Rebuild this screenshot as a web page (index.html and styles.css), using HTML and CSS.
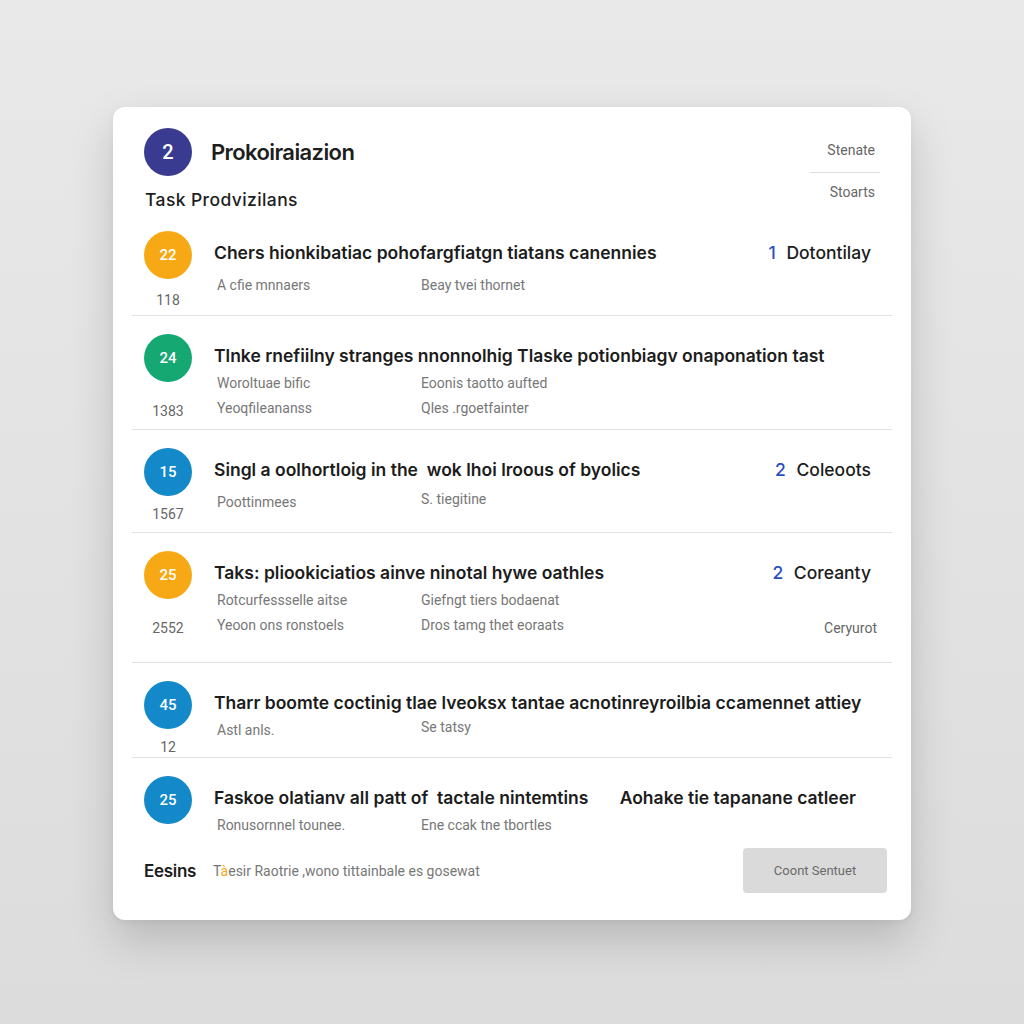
FILE: index.html
```html
<!DOCTYPE html>
<html lang="en">
<head>
  <meta charset="UTF-8">
  <meta name="viewport" content="width=device-width, initial-scale=1.0">
  <title>Prokoiraiazion</title>
  <link rel="stylesheet" href="styles.css">
</head>
<body>

<div class="card">
  <!-- En-tête -->
  <div class="header">
    <div class="header-left">
      <div class="brand">
        <span class="dot dot-indigo">2</span>
        <h1>Prokoiraiazion</h1>
      </div>
      <h2>Task Prodvizilans</h2>
    </div>
    <div class="header-right">
      <span class="meta">Stenate</span>
      <span class="meta meta-sep">Stoarts</span>
    </div>
  </div>

  <!-- Liste des tâches -->
  <div class="tasks">
    <div class="task task-first">
      <div class="task-left">
        <span class="dot dot-orange">22</span>
        <span class="count">118</span>
      </div>
      <div class="task-body">
        <div class="task-title">
          <span>Chers hionkibatiac pohofargfiatgn tiatans canennies</span>
          <span class="badge"><b>1</b> Dotontilay</span>
        </div>
        <div class="task-sub task-sub-low">
          <span>A cfie mnnaers</span>
          <span>Beay tvei thornet</span>
        </div>
      </div>
    </div>

    <div class="task">
      <div class="task-left">
        <span class="dot dot-green">24</span>
        <span class="count">1383</span>
      </div>
      <div class="task-body">
        <div class="task-title">
          <span>Tlnke rnefiilny stranges nnonnolhig Tlaske potionbiagv onaponation tast</span>
        </div>
        <div class="task-sub">
          <span>Woroltuae bific</span>
          <span>Eoonis taotto aufted</span>
          <span>Yeoqfileananss</span>
          <span>Qles .rgoetfainter</span>
        </div>
      </div>
    </div>

    <div class="task">
      <div class="task-left">
        <span class="dot dot-blue">15</span>
        <span class="count">1567</span>
      </div>
      <div class="task-body">
        <div class="task-title">
          <span>Singl a oolhortloig in the &nbsp;wok lhoi lroous of byolics</span>
          <span class="badge"><b>2</b> Coleoots</span>
        </div>
        <div class="task-sub task-sub-low">
          <span>Poottinmees</span>
          <span class="up">S. tiegitine</span>
        </div>
      </div>
    </div>

    <div class="task task-tall">
      <div class="task-left">
        <span class="dot dot-orange">25</span>
        <span class="count">2552</span>
      </div>
      <div class="task-body">
        <div class="task-title">
          <span>Taks: pliookiciatios ainve ninotal hywe oathles</span>
          <span class="badge"><b>2</b> Coreanty</span>
        </div>
        <div class="task-sub task-sub-3">
          <span>Rotcurfessselle aitse</span>
          <span>Giefngt tiers bodaenat</span>
          <span></span>
          <span>Yeoon ons ronstoels</span>
          <span>Dros tamg thet eoraats</span>
          <span class="extra">Ceryurot</span>
        </div>
      </div>
    </div>

    <div class="task task-short">
      <div class="task-left">
        <span class="dot dot-blue">45</span>
        <span class="count">12</span>
      </div>
      <div class="task-body">
        <div class="task-title">
          <span>Tharr boomte coctinig tlae lveoksx tantae acnotinreyroilbia ccamennet attiey</span>
        </div>
        <div class="task-sub">
          <span>Astl anls.</span>
          <span class="up">Se tatsy</span>
        </div>
      </div>
    </div>

    <div class="task task-last">
      <div class="task-left">
        <span class="dot dot-blue">25</span>
      </div>
      <div class="task-body">
        <div class="task-title">
          <span>Faskoe olatianv all patt of &nbsp;tactale nintemtins</span>
          <span class="badge badge-text">Aohake tie tapanane catleer</span>
        </div>
        <div class="task-sub">
          <span>Ronusornnel tounee.</span>
          <span>Ene ccak tne tbortles</span>
        </div>
      </div>
    </div>
  </div>

  <!-- Pied -->
  <div class="footer">
    <span class="footer-label">Eesins</span>
    <span class="footer-text">T<span class="accent">à</span>esir Raotrie ,wono tittainbale es gosewat</span>
    <button class="btn">Coont Sentuet</button>
  </div>
</div>

</body>
</html>
```

FILE: styles.css
```css
body {
  font-family: Roboto, "Liberation Sans", Arial, sans-serif;
  background: linear-gradient(#e9e9e9, #dcdcdc);
  margin: 0;
  height: 1024px;
  padding-top: 107px;
  box-sizing: border-box;
}

/* Carte principale */
.card {
  width: 798px;
  margin-left: 113px;
  box-sizing: border-box;
  background-color: #fff;
  border-radius: 12px;
  box-shadow: 0 20px 44px rgba(0, 0, 0, 0.17), 0 2px 6px rgba(0, 0, 0, 0.05);
  padding: 21px 31px 27px;
}

/* En-tête */
.header {
  display: flex;
  justify-content: space-between;
}

.brand {
  display: flex;
  align-items: center;
  gap: 19px;
}

h1 {
  margin: 0;
  font-family: Inter, Roboto, sans-serif;
  font-size: 22px;
  font-weight: 600;
  color: #1e1e1e;
  letter-spacing: -0.6px;
}

h2 {
  margin: 13px 0 0 1px;
  font-family: Inter, Roboto, sans-serif;
  font-size: 17.5px;
  font-weight: 500;
  line-height: 22px;
  color: #1e1e1e;
  letter-spacing: 0.4px;
}

.header-right {
  display: flex;
  flex-direction: column;
  align-items: flex-end;
  width: 70px;
  margin-top: 12px;
}

.meta {
  font-size: 14px;
  line-height: 20px;
  color: #666;
  padding-right: 5px;
}

.meta-sep {
  align-self: stretch;
  text-align: right;
  border-top: 1px solid #ddd;
  margin-top: 12px;
  padding-top: 9px;
}

/* Pastilles */
.dot {
  display: flex;
  align-items: center;
  justify-content: center;
  width: 48px;
  height: 48px;
  border-radius: 50%;
  color: #fff;
  font-size: 15px;
  font-weight: 500;
  flex-shrink: 0;
}

.dot-indigo { background-color: #383b8f; font-size: 20px; }
.dot-orange { background-color: #f6a914; }
.dot-green { background-color: #16a872; }
.dot-blue { background-color: #1389c9; }

/* Liste */
.tasks {
  margin: 2px -12px 0;
}

.task {
  display: flex;
  padding: 18px 12px 8px;
  border-bottom: 1px solid #e2e2e2;
}

.task-first { padding-bottom: 5px; }
.task-first .count { margin-top: 11px; }
.task-tall { padding-bottom: 24px; }
.task-short { padding-bottom: 0; }
.task-last { border-bottom: none; padding: 18px 12px 0; }

.task-left {
  display: flex;
  flex-direction: column;
  justify-content: space-between;
  align-items: center;
  width: 48px;
  margin-right: 22px;
}

.count {
  margin-top: 8px;
  font-size: 14px;
  line-height: 20px;
  color: #666;
}

.task-body {
  flex: 1;
}

.task-title {
  display: flex;
  justify-content: space-between;
  margin-top: 10px;
  font-family: Inter, Roboto, sans-serif;
  font-size: 17.5px;
  font-weight: 600;
  line-height: 24px;
  color: #1c1c1c;
  letter-spacing: 0;
  white-space: nowrap;
}

.badge {
  color: #1c1c1c;
  font-weight: 500;
  padding-right: 9px;
}

.badge b {
  color: #2a4fc2;
  font-weight: 500;
  margin-right: 6px;
}

.badge-text {
  font-weight: 600;
  padding-right: 24px;
}

.task-sub {
  display: grid;
  grid-template-columns: 204px 1fr;
  margin-top: 3px;
  margin-left: 3px;
  font-size: 14px;
  line-height: 25px;
  color: #777;
}

.task-sub-low {
  margin-top: 8px;
}

.task-sub-3 {
  grid-template-columns: 204px 1fr auto;
}

.task-sub .up {
  position: relative;
  top: -3px;
}

.extra {
  color: #666;
  font-size: 14px;
  padding-right: 3px;
  position: relative;
  top: 3px;
}

/* Pied */
.footer {
  display: flex;
  align-items: center;
  margin-top: 10px;
}

.footer-label {
  width: 69px;
  font-family: Inter, Roboto, sans-serif;
  font-size: 17px;
  font-weight: 600;
  color: #1c1c1c;
  letter-spacing: -0.3px;
}

.footer-text {
  flex: 1;
  font-size: 14px;
  color: #777;
}

.accent {
  color: #f6a914;
}

.btn {
  width: 144px;
  height: 45px;
  margin-right: -7px;
  background-color: #dadada;
  border: none;
  border-radius: 4px;
  color: #6a6a6a;
  font-family: inherit;
  font-size: 13px;
}
```
